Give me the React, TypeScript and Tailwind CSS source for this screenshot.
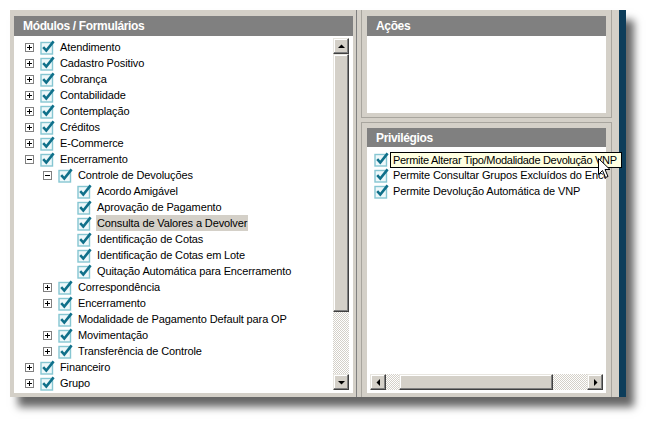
import React from 'react'

type Node = {
  nivel: number
  exp: '+' | '-' | null
  nome: string
  sel?: boolean
}

const arvore: Node[] = [
  { nivel: 0, exp: '+', nome: 'Atendimento' },
  { nivel: 0, exp: '+', nome: 'Cadastro Positivo' },
  { nivel: 0, exp: '+', nome: 'Cobrança' },
  { nivel: 0, exp: '+', nome: 'Contabilidade' },
  { nivel: 0, exp: '+', nome: 'Contemplação' },
  { nivel: 0, exp: '+', nome: 'Créditos' },
  { nivel: 0, exp: '+', nome: 'E-Commerce' },
  { nivel: 0, exp: '-', nome: 'Encerramento' },
  { nivel: 1, exp: '-', nome: 'Controle de Devoluções' },
  { nivel: 2, exp: null, nome: 'Acordo Amigável' },
  { nivel: 2, exp: null, nome: 'Aprovação de Pagamento' },
  { nivel: 2, exp: null, nome: 'Consulta de Valores a Devolver', sel: true },
  { nivel: 2, exp: null, nome: 'Identificação de Cotas' },
  { nivel: 2, exp: null, nome: 'Identificação de Cotas em Lote' },
  { nivel: 2, exp: null, nome: 'Quitação Automática para Encerramento' },
  { nivel: 1, exp: '+', nome: 'Correspondência' },
  { nivel: 1, exp: '+', nome: 'Encerramento' },
  { nivel: 1, exp: null, nome: 'Modalidade de Pagamento Default para OP' },
  { nivel: 1, exp: '+', nome: 'Movimentação' },
  { nivel: 1, exp: '+', nome: 'Transferência de Controle' },
  { nivel: 0, exp: '+', nome: 'Financeiro' },
  { nivel: 0, exp: '+', nome: 'Grupo' },
]

const privilegios = [
  'Permite Alterar Tipo/Modalidade Devolução VNP',
  'Permite Consultar Grupos Excluídos do Encerramento',
  'Permite Devolução Automática de VNP',
]

const recuo = ['pl-[11px]', 'pl-[29px]', 'pl-[48px]']

function Check() {
  return (
    <svg width="15" height="15" viewBox="0 0 15 15" className="shrink-0">
      <rect x="1" y="2.5" width="11.5" height="11.5" fill="#eef8fa" stroke="#86c6d2" strokeWidth="1.4" />
      <path d="M3.2 7.2 L6.3 10.6 L13.6 1.4" fill="none" stroke="#10708a" strokeWidth="2.6" />
    </svg>
  )
}

function Expander({ tipo }: { tipo: '+' | '-' | null }) {
  if (!tipo) return <span className="w-[9px] shrink-0" />
  return (
    <svg width="9" height="9" viewBox="0 0 9 9" className="shrink-0">
      <rect x="0.5" y="0.5" width="8" height="8" fill="#fff" stroke="#808080" />
      <path d="M2 4.5 H7" stroke="#000" />
      {tipo === '+' && <path d="M4.5 2 V7" stroke="#000" />}
    </svg>
  )
}

function Seta({ dir }: { dir: 'up' | 'down' | 'left' | 'right' }) {
  const d = {
    up: 'M1 6 L4.5 2.5 L8 6 Z',
    down: 'M1 3 L4.5 6.5 L8 3 Z',
    left: 'M6 1 L2.5 4.5 L6 8 Z',
    right: 'M3 1 L6.5 4.5 L3 8 Z',
  }[dir]
  return (
    <svg width="9" height="9" viewBox="0 0 9 9">
      <path d={d} fill="#000" />
    </svg>
  )
}

function Botao({ children, className = '' }: { children?: React.ReactNode; className?: string }) {
  return (
    <div
      className={
        'flex items-center justify-center bg-[#d4d0c8] border border-t-[#e8e6e0] border-l-[#e8e6e0] border-r-[#404040] border-b-[#404040] shadow-[inset_-1px_-1px_0_#808080,inset_1px_1px_0_#ffffff] ' +
        className
      }
    >
      {children}
    </div>
  )
}

const xadrez =
  'bg-[image:repeating-conic-gradient(#d4d0c8_0%_25%,#ffffff_0%_50%)] bg-[length:2px_2px]'

export default function App() {
  return (
    <div className="w-[646px] h-[447px] bg-white overflow-hidden pt-[10px] pl-[10px] font-['Liberation_Sans',Arial,sans-serif] text-[11px] tracking-[-0.12px] text-black">
      <div className="flex w-[616px] h-[387px] shadow-[8px_10px_8px_rgba(0,0,0,0.6)]">
        <div className="flex w-[609px] h-full bg-[#d4d0c8]">
          {/* Módulos / Formulários */}
          <div className="flex flex-col w-[346px] pl-[4px] pr-[3px] pt-[6px] pb-[4px]">
            <div className="h-[20px] shrink-0 bg-[#808080] text-white font-bold text-[12px] pl-[9px] flex items-center tracking-[-0.35px]">
              Módulos / Formulários
            </div>
            <div className="flex-1 bg-white flex min-h-0">
              <div className="flex-1 overflow-hidden pt-[3px]">
                {arvore.map((n, i) => (
                  <div key={i} className={'h-[16px] flex items-center whitespace-nowrap ' + recuo[n.nivel]}>
                    <Expander tipo={n.exp} />
                    <span className="w-[6px] shrink-0" />
                    <Check />
                    <span className={'ml-[4px] px-[1px] h-[16px] leading-[16px] ' + (n.sel ? 'bg-[#d4d0c8]' : '')}>
                      {n.nome}
                    </span>
                  </div>
                ))}
              </div>
              <div className="w-[16px] mt-[2px] mb-[3px] mr-[4px] flex flex-col">
                <Botao className="h-[16px] shrink-0">
                  <Seta dir="up" />
                </Botao>
                <Botao className="h-[258px] shrink-0" />
                <div className={'flex-1 ' + xadrez} />
                <Botao className="h-[16px] shrink-0">
                  <Seta dir="down" />
                </Botao>
              </div>
            </div>
          </div>

          <div className="w-[1px] bg-[#808080]" />

          {/* coluna direita */}
          <div className="flex flex-col w-[262px] pl-[4px] pr-[7px]">
            <div className="h-[108px] shrink-0 flex flex-col border-x border-b border-[#a8a59e] pt-[6px] px-[5px] pb-[4px]">
              <div className="h-[20px] shrink-0 bg-[#808080] text-white font-bold text-[12px] pl-[9px] flex items-center tracking-[-0.35px]">
                Ações
              </div>
              <div className="flex-1 bg-white" />
            </div>
            <div className="h-[4px] shrink-0" />
            <div className="flex-1 flex flex-col border-x border-t border-[#a8a59e] pt-[5px] px-[5px] pb-[4px] min-h-0">
              <div className="h-[19px] shrink-0 bg-[#808080] text-white font-bold text-[12px] pl-[9px] flex items-center tracking-[-0.35px]">
                Privilégios
              </div>
              <div className="flex-1 bg-white relative flex flex-col">
                <div className="flex-1 overflow-hidden pt-[4px] pl-[7px]">
                  {privilegios.map((p, i) => (
                    <div key={i} className="h-[16px] flex items-center whitespace-nowrap">
                      <Check />
                      <span className="ml-[4px]">{p}</span>
                    </div>
                  ))}
                </div>
                <div className="h-[16px] mx-[3px] mb-[3px] flex">
                  <Botao className="w-[16px] shrink-0">
                    <Seta dir="left" />
                  </Botao>
                  <div className={'w-[13px] shrink-0 ' + xadrez} />
                  <Botao className="w-[154px] shrink-0" />
                  <div className={'flex-1 ' + xadrez} />
                  <Botao className="w-[16px] shrink-0">
                    <Seta dir="right" />
                  </Botao>
                </div>

                {/* tooltip sobre a lista */}
                <div className="absolute left-[23px] top-[5px] w-[232px] h-[16px] bg-[#ffffe1] border border-black pl-[2px] leading-[14px] whitespace-nowrap tracking-[-0.3px]">
                  Permite Alterar Tipo/Modalidade Devolução VNP
                </div>
                <svg className="absolute left-[231px] top-[11px]" width="13" height="21" viewBox="0 0 13 21">
                  <path
                    d="M0.5 0.5 L0.5 16.5 L4.5 12.5 L7.5 19.5 L10 18.5 L7 11.5 L12 11.5 Z"
                    fill="#fff"
                    stroke="#000"
                    strokeWidth="1"
                  />
                </svg>
              </div>
            </div>
          </div>
        </div>
        <div className="w-[7px] h-full bg-[#0d3d5a]" />
      </div>
    </div>
  )
}
